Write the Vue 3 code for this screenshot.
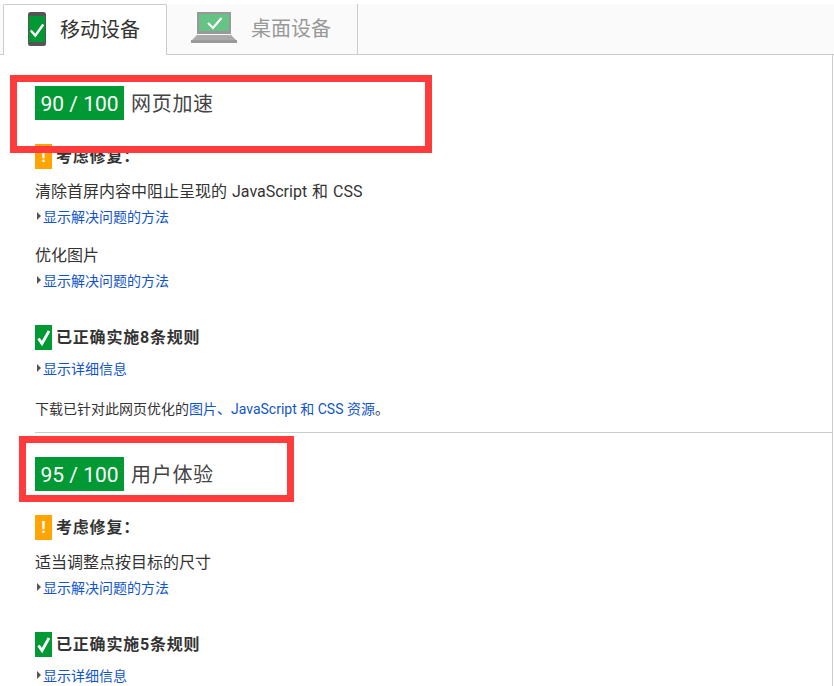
<script setup>
const sections = [
  {
    score: '90 / 100', title: '网页加速', fixes: ['清除首屏内容中阻止呈现的 JavaScript 和 CSS', '优化图片'], count: 8, note: true,
  },
  {
    score: '95 / 100', title: '用户体验', fixes: ['适当调整点按目标的尺寸'], count: 5, note: false,
  },
]
</script>

<template>
  <div class="page">
    <div class="tabs">
      <div class="tab active">
        <svg class="phone" width="18" height="34" viewBox="0 0 18 34">
          <rect x="0" y="0" width="18" height="34" rx="2.500" fill="#555" />
          <rect x="1" y="4" width="16" height="26" fill="#093" />
          <path d="M2.800 18.500l4.500 5 8-11" fill="none" stroke="#fff" stroke-width="2.400" />
        </svg>
        <span>移动设备</span>
      </div>
      <div class="tab inactive">
        <svg class="laptop" width="46" height="31" viewBox="0 0 46 31">
          <rect x="6" y="0" width="34" height="22" fill="#999" />
          <rect x="8" y="2" width="30" height="17" fill="#66c285" />
          <path d="M6 23h34l5 5H1z" fill="#aaa" />
          <rect x="0" y="28" width="46" height="3" fill="#999" />
          <path d="M17 11l5 5 8.500-10" fill="none" stroke="#fff" stroke-width="2.200" />
        </svg>
        <span>桌面设备</span>
      </div>
    </div>

    <div class="content">
      <section v-for="(s, i) in sections" :key="s.title" class="section" :class="{ last: i === sections.length - 1 }">
        <h2 class="heading">
          <span class="score">{{ s.score }}</span>
          <span class="title">{{ s.title }}</span>
        </h2>

        <div class="status warn-row">
          <span class="badge warn">!</span>
          <strong>考虑修复：</strong>
        </div>
        <div v-for="f in s.fixes" :key="f" class="fix">
          <div class="fix-text">{{ f }}</div>
          <a class="link"><i class="arrow"></i>显示解决问题的方法</a>
        </div>

        <div class="status ok-row">
          <span class="badge ok">
            <svg width="17" height="25" viewBox="0 0 17 25">
              <path d="M3.500 13.500l3.500 5L14 6" fill="none" stroke="#fff" stroke-width="2.800" />
            </svg>
          </span>
          <strong>已正确实施{{ s.count }}条规则</strong>
        </div>
        <a class="link detail"><i class="arrow"></i>显示详细信息</a>

        <p v-if="s.note" class="note">下载已针对此网页优化的<a class="plain">图片、JavaScript 和 CSS 资源</a>。</p>
      </section>
    </div>

    <div class="mark mark-one"></div>
    <div class="mark mark-two"></div>
  </div>
</template>

<style scoped>
.page {
  position: relative;
  width: 834px;
  height: 686px;
  overflow: hidden;
  background: #fff;
  color: #333;
  font-family: Roboto, "Noto Sans CJK SC", sans-serif;
}
.tabs {
  box-sizing: border-box;
  height: 51px;
  margin-top: 4px;
  padding-left: 3px;
  display: flex;
  background: #fafafa;
  border-bottom: 1px solid #ccc;
}
.tab {
  box-sizing: border-box;
  display: flex;
  align-items: center;
  padding-bottom: 4px;
  font-size: 20px;
}
.active {
  width: 164px;
  height: 51px;
  padding-left: 24px;
  background: #fff;
  border: 1px solid #ccc;
  border-bottom: 0;
  gap: 14px;
  border-radius: 2px 2px 0 0;
}
.inactive {
  width: 191px;
  height: 50px;
  padding-left: 24px;
  border-right: 1px solid #ccc;
  color: #999;
  gap: 14px;
}
.phone { margin-top: 2px; }
.content {
  min-height: 631px;
  margin-right: 1px;
  padding: 31px 0 0 35px;
  border-right: 1px solid #ccc;
}
.section {
  height: 346px;
  border-bottom: 1px solid #ccc;
  margin-bottom: 24px;
}
.section.last {
  border-bottom: 0;
  margin-bottom: 0;
}
.heading {
  margin: 0;
  height: 34px;
  display: flex;
  align-items: center;
  font-weight: 400;
  font-size: 20px;
}
.score {
  width: 89px;
  height: 34px;
  line-height: 36px;
  text-align: center;
  background: #093;
  color: #fff;
  font-size: 21px;
  font-weight: 400;
}
.title {
  margin-left: 7px;
  letter-spacing: 0.7px;
  color: #444;
  line-height: 34px;
  margin-top: 1px;
}
.status {
  display: flex;
  align-items: center;
  height: 25px;
  font-size: 16px;
  gap: 4px;
}
.status strong {
  font-weight: 700;
  margin-top: -4px;
  letter-spacing: 0.8px;
}
.warn-row { margin-top: 24px; margin-bottom: 11px; }
.ok-row { margin-top: 33px; }
.badge {
  width: 17px;
  height: 25px;
  display: block;
  flex: none;
}
.warn {
  background: #ffa400;
  color: #fff;
  font-weight: 700;
  font-size: 17px;
  line-height: 25px;
  text-align: center;
}
.ok { background: #093; }
.ok svg { display: block; }
.fix { margin-bottom: 16px; }
.fix-text {
  font-size: 16px;
  line-height: 24px;
  word-spacing: 1px;
}
.fix:last-of-type { margin-bottom: 0; }
.link {
  display: flex;
  align-items: center;
  height: 24px;
  font-size: 14px;
  color: #15c;
}
.detail { margin-top: 6px; }
.arrow {
  width: 0;
  height: 0;
  margin: 0 2px 0 2px;
  border-left: 4px solid #555;
  border-top: 4px solid transparent;
  border-bottom: 4px solid transparent;
}
.note {
  margin: 17px 0 0;
  font-size: 14px;
  line-height: 24px;
}
.plain { color: #15c; }
.mark {
  position: absolute;
  box-sizing: border-box;
  border: 7px solid #ff3b3b;
  pointer-events: none;
}
.mark-one { left: 10px; top: 75px; width: 422px; height: 78px; }
.mark-two { left: 19px; top: 436px; width: 275px; height: 66px; }
</style>
